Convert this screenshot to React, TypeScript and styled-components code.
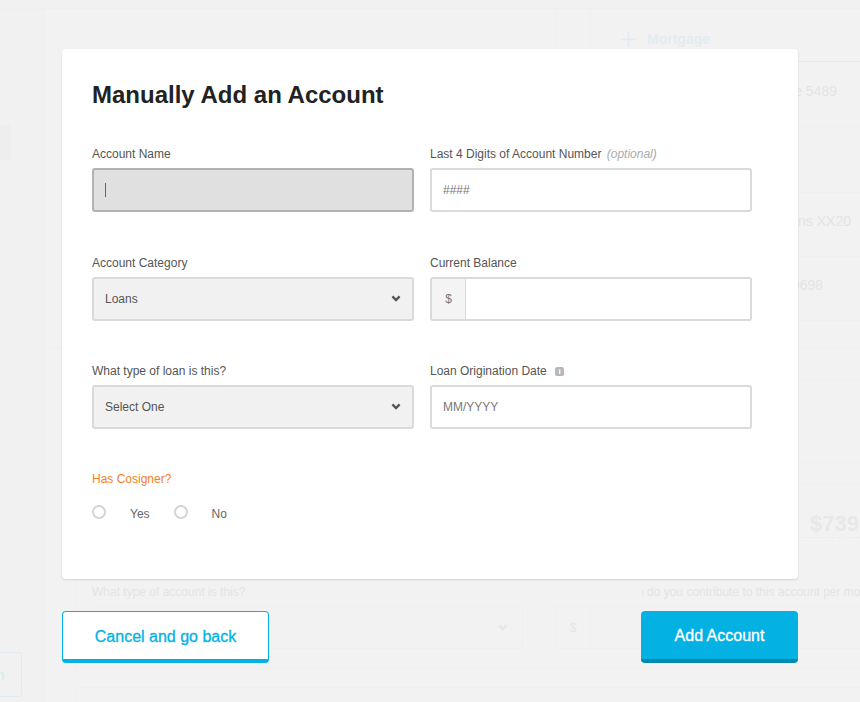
import React from 'react';
import styled, { createGlobalStyle } from 'styled-components';

const GlobalStyle = createGlobalStyle`
  html, body {
    margin: 0;
    padding: 0;
    background: #f1f1f1;
  }
  * {
    box-sizing: border-box;
  }
`;

const ChevronIcon = ({ color }: { color: string }) => (
  <svg width="10" height="7" viewBox="0 0 10 7">
    <path d="M1.4 1.4 5 5 8.6 1.4" fill="none" stroke={color} strokeWidth="2.4" />
  </svg>
);

const App = () => {
  return (
    <Page>
      <GlobalStyle />

      {/* faded page behind the modal */}
      <Backdrop>
        <TopStrip />
        <BackdropBody>
          <Side>
            <SideItem />
            <SideButton>n</SideButton>
          </Side>
          <BackdropMain>
            <TopColumns>
              <LeftCard />
              <RightCard>
                <CardHeader>
                  <svg width="15" height="15" viewBox="0 0 15 15">
                    <path d="M7.5 0v15M0 7.5h15" stroke="#dfecf1" strokeWidth="1.6" />
                  </svg>
                  <span>Mortgage</span>
                </CardHeader>
                <GhostRow $height={65}>Sallie Mae 5489</GhostRow>
                <GhostRow $height={66} />
                <GhostRow $height={64} $right={9}>Student Loans XX20</GhostRow>
                <GhostRow $height={64} $right={37}>Auto Loan 9698</GhostRow>
                <GhostRow $height={27} />
                <GhostRow $height={32} />
                <GhostRow $height={83} />
                <GhostRow $height={21} />
                <Total>$739</Total>
              </RightCard>
            </TopColumns>
            <FormCard>
              <GhostColumn>
                <GhostLabel>What type of account is this?</GhostLabel>
                <GhostSelect>
                  <ChevronIcon color="#e6e6e6" />
                </GhostSelect>
              </GhostColumn>
              <GhostColumn>
                <ClippedLabel>How much do you contribute to this account per month?</ClippedLabel>
                <GhostMoney>
                  <GhostAddon>$</GhostAddon>
                </GhostMoney>
              </GhostColumn>
            </FormCard>
            <NextCard />
          </BackdropMain>
        </BackdropBody>
      </Backdrop>

      <Overlay>
        <Modal>
          <Title>Manually Add an Account</Title>
          <FormGrid>
            <Field>
              <Label>Account Name</Label>
              <ActiveInput>
                <Caret />
              </ActiveInput>
            </Field>
            <Field>
              <Label>
                Last 4 Digits of Account Number <Optional>(optional)</Optional>
              </Label>
              <TextInput placeholder="####" />
            </Field>

            <Field>
              <Label>Account Category</Label>
              <SelectWrap>
                <Select defaultValue="loans">
                  <option value="loans">Loans</option>
                </Select>
                <Chevron>
                  <ChevronIcon color="#555555" />
                </Chevron>
              </SelectWrap>
            </Field>
            <Field>
              <Label>Current Balance</Label>
              <MoneyInput>
                <Addon>$</Addon>
                <MoneyField />
              </MoneyInput>
            </Field>

            <Field>
              <Label>What type of loan is this?</Label>
              <SelectWrap>
                <Select defaultValue="">
                  <option value="">Select One</option>
                </Select>
                <Chevron>
                  <ChevronIcon color="#555555" />
                </Chevron>
              </SelectWrap>
            </Field>
            <Field>
              <Label>
                Loan Origination Date <InfoIcon>i</InfoIcon>
              </Label>
              <TextInput placeholder="MM/YYYY" />
            </Field>
          </FormGrid>

          <Cosigner>
            <CosignerLabel>Has Cosigner?</CosignerLabel>
            <RadioRow>
              <RadioOption>
                <Radio />
                <RadioText>Yes</RadioText>
              </RadioOption>
              <RadioOption>
                <Radio />
                <RadioText>No</RadioText>
              </RadioOption>
            </RadioRow>
          </Cosigner>
        </Modal>

        <Actions>
          <CancelButton>Cancel and go back</CancelButton>
          <AddButton>Add Account</AddButton>
        </Actions>
      </Overlay>
    </Page>
  );
};

export default App;

const Page = styled.div`
  position: relative;
  width: 860px;
  height: 702px;
  overflow: hidden;
  background: #f1f1f1;
  font-family: 'Liberation Sans', Arial, sans-serif;
`;

const Backdrop = styled.div`
  display: flex;
  flex-direction: column;
  height: 100%;
`;

const TopStrip = styled.div`
  height: 9px;
  flex: none;
  border-bottom: 1px solid #efefef;
`;

const BackdropBody = styled.div`
  display: flex;
  flex: 1;
  min-height: 0;
`;

const Side = styled.div`
  width: 44px;
  flex: none;
  border-right: 1px solid #efefef;
  display: flex;
  flex-direction: column;
`;

const SideItem = styled.div`
  width: 10px;
  height: 35px;
  margin-top: 116px;
  background: #eeeeee;
`;

const SideButton = styled.div`
  width: 22px;
  height: 45px;
  margin-top: 492px;
  border: 1px solid #dfedf2;
  border-left: none;
  border-radius: 0 3px 3px 0;
  display: flex;
  align-items: center;
  color: #dcebf0;
  font-size: 14px;
  font-weight: bold;
  text-indent: -4px;
`;

const BackdropMain = styled.div`
  flex: 1;
  min-width: 0;
  display: flex;
  flex-direction: column;
  background: #f2f2f2;
`;

const TopColumns = styled.div`
  display: flex;
  height: 566px;
  flex: none;
  gap: 33px;
`;

const LeftCard = styled.div`
  width: 513px;
  height: 339px;
  flex: none;
  border-right: 1px solid #efefef;
  border-bottom: 1px solid #efefef;
`;

const RightCard = styled.div`
  flex: 1;
  border-left: 1px solid #efefef;
  display: flex;
  flex-direction: column;
`;

const CardHeader = styled.div`
  height: 53px;
  flex: none;
  padding: 8px 0 0 30px;
  display: flex;
  align-items: center;
  gap: 11px;
  border-bottom: 1px solid #e8e8e8;
  color: #e1edf1;
  font-size: 14px;
  font-weight: bold;
`;

const GhostRow = styled.div<{ $height: number; $right?: number }>`
  height: ${(p) => p.$height}px;
  flex: none;
  display: flex;
  align-items: center;
  justify-content: flex-end;
  white-space: nowrap;
  padding-right: ${(p) => p.$right ?? 23}px;
  padding-bottom: 7px;
  border-bottom: 1px solid #efefef;
  color: #e4e4e4;
  font-size: 14px;
`;

const Total = styled.div`
  margin-top: 27px;
  padding: 0 0 0 219px;
  white-space: nowrap;
  border-bottom: 1px dashed #ebebeb;
  color: #e8e8e8;
  font-size: 22px;
  font-weight: bold;
  line-height: 26px;
`;

const FormCard = styled.div`
  height: 93px;
  flex: none;
  margin-left: 31px;
  padding: 10px 0 0 16px;
  display: flex;
  gap: 32px;
  border-left: 1px solid #efefef;
  border-bottom: 1px solid #efefef;
`;

const GhostColumn = styled.div`
  flex: none;
  white-space: nowrap;
`;

const GhostLabel = styled.div`
  margin-bottom: 6px;
  color: #e4e4e4;
  font-size: 12px;
  line-height: 15px;
`;

/* the left part of this label is hidden in the faded page */
const ClippedLabel = styled(GhostLabel)`
  padding-left: 32px;
  clip-path: inset(0 0 0 87px);
`;

const GhostSelect = styled.div`
  width: 431px;
  height: 43px;
  padding-right: 14px;
  display: flex;
  align-items: center;
  justify-content: flex-end;
  border: 1px solid #efefef;
  border-radius: 3px;
`;

const GhostMoney = styled.div`
  width: 320px;
  height: 43px;
  border: 1px solid #efefef;
  border-radius: 3px;
`;

const GhostAddon = styled.div`
  width: 35px;
  height: 100%;
  display: flex;
  align-items: center;
  justify-content: center;
  border-right: 1px solid #efefef;
  color: #e6e6e6;
  font-size: 12px;
`;

const NextCard = styled.div`
  height: 60px;
  flex: none;
  margin: 19px 0 0 31px;
  border: 1px solid #efefef;
  border-right: none;
  border-radius: 3px 0 0 0;
`;

const Overlay = styled.div`
  position: absolute;
  inset: 0;
  padding: 49px 62px 0;
  display: flex;
  flex-direction: column;
`;

const Modal = styled.div`
  height: 530px;
  flex: none;
  padding: 30px 46px 0 30px;
  background: #ffffff;
  border-radius: 4px;
  box-shadow: 0 1px 2px rgba(0, 0, 0, 0.14);
`;

const Title = styled.h1`
  margin: 0 0 36px;
  color: #222222;
  font-size: 24px;
  font-weight: bold;
  line-height: 32px;
`;

const FormGrid = styled.div`
  display: grid;
  grid-template-columns: 322px 322px;
  grid-template-rows: 66px 65px 65px;
  column-gap: 16px;
  row-gap: 43px;
`;

const Field = styled.div`
  display: flex;
  flex-direction: column;
`;

const Label = styled.label`
  height: 15px;
  margin-bottom: 6px;
  color: #555555;
  font-size: 12px;
  line-height: 15px;
  white-space: nowrap;
`;

const Optional = styled.em`
  margin-left: 2px;
  color: #aaaaaa;
`;

const InfoIcon = styled.span`
  display: inline-block;
  width: 9px;
  height: 9px;
  margin-left: 5px;
  border-radius: 2px;
  background: #b8b8b8;
  color: #ffffff;
  font-size: 8px;
  font-weight: bold;
  line-height: 9px;
  text-align: center;
  vertical-align: 1px;
`;

const TextInput = styled.input`
  width: 100%;
  height: 44px;
  padding: 0 11px;
  background: #ffffff;
  border: 2px solid #dadada;
  border-radius: 3px;
  outline: none;
  color: #555555;
  font-family: inherit;
  font-size: 12px;

  &::placeholder {
    color: #777777;
    opacity: 1;
  }
`;

const ActiveInput = styled.div`
  width: 100%;
  height: 44px;
  padding: 0 11px;
  display: flex;
  align-items: center;
  background: #e0e0e0;
  border: 2px solid #b2b2b2;
  border-radius: 3px;
`;

const Caret = styled.span`
  width: 1px;
  height: 14px;
  background: #666666;
`;

const SelectWrap = styled.div`
  position: relative;
`;

const Select = styled.select`
  width: 100%;
  height: 44px;
  padding: 0 11px;
  appearance: none;
  background: #f1f1f1;
  border: 2px solid #dadada;
  border-radius: 3px;
  outline: none;
  color: #555555;
  font-family: inherit;
  font-size: 12px;
`;

const Chevron = styled.span`
  position: absolute;
  top: 18px;
  right: 13px;
  display: flex;
  pointer-events: none;
`;

const MoneyInput = styled.div`
  height: 44px;
  display: flex;
  border: 2px solid #dadada;
  border-radius: 3px;
`;

const Addon = styled.span`
  width: 34px;
  flex: none;
  display: flex;
  align-items: center;
  justify-content: center;
  background: #f4f4f4;
  border-right: 1px solid #dadada;
  color: #777777;
  font-size: 12px;
`;

const MoneyField = styled.input`
  flex: 1;
  min-width: 0;
  border: none;
  outline: none;
  background: #ffffff;
`;

const Cosigner = styled.div`
  margin-top: 43px;
`;

const CosignerLabel = styled.div`
  color: #f47f1f;
  font-size: 12px;
  line-height: 15px;
`;

const RadioRow = styled.div`
  margin-top: 18px;
  display: flex;
  gap: 24px;
`;

const RadioOption = styled.label`
  display: flex;
  align-items: center;
  gap: 24px;
  color: #666666;
  font-size: 12px;
  line-height: 14px;
`;

const RadioText = styled.span`
  margin-top: 2px;
`;

const Radio = styled.span`
  width: 14px;
  height: 14px;
  flex: none;
  margin-top: -2px;
  border: 2px solid #d4d4d4;
  border-radius: 50%;
  background: #ffffff;
`;

const Actions = styled.div`
  margin-top: 32px;
  display: flex;
  justify-content: space-between;
`;

const CancelButton = styled.button`
  width: 207px;
  height: 52px;
  padding: 2px 0 0;
  background: #ffffff;
  border: 1px solid #03b2e3;
  border-bottom-width: 4px;
  border-radius: 4px;
  color: #03b2e3;
  font-family: inherit;
  font-size: 16px;
  -webkit-text-stroke: 0.3px #03b2e3;
`;

const AddButton = styled.button`
  width: 157px;
  height: 52px;
  padding: 2px 0 0;
  background: #03b2e3;
  border: none;
  border-bottom: 4px solid #0088ae;
  border-radius: 4px;
  color: #ffffff;
  font-family: inherit;
  font-size: 16px;
  -webkit-text-stroke: 0.3px #ffffff;
`;
